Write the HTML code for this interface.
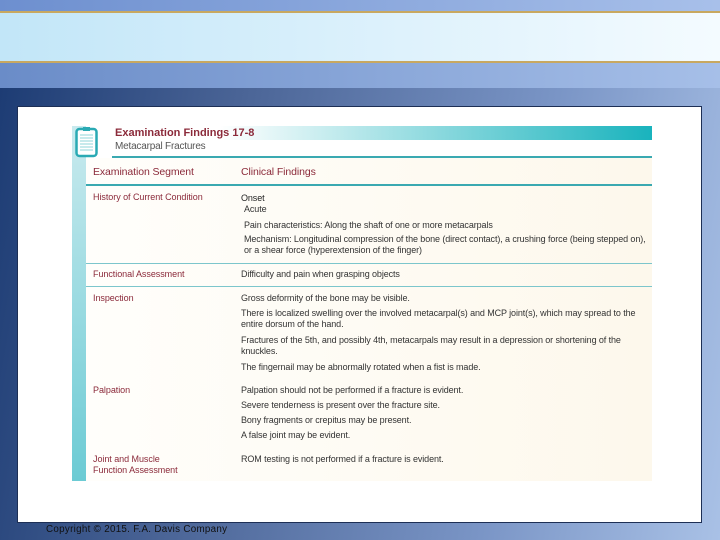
<!DOCTYPE html>
<html><head><meta charset="utf-8"><style>
*{margin:0;padding:0;box-sizing:border-box}
body{width:720px;height:540px;overflow:hidden;position:relative;font-family:"Liberation Sans",sans-serif;background:#5a7ab0}
.a{position:absolute;white-space:nowrap}
.t{font-size:9px;color:#333;letter-spacing:-0.1px;line-height:11px}
.l{font-size:9px;color:#8b2a3a;letter-spacing:-0.05px;line-height:11px}
</style></head><body>
<div class="a" style="left:0;top:0;width:720px;height:12px;background:linear-gradient(90deg,#6d8fcf,#a8c0ea)"></div>
<div class="a" style="left:0;top:11px;width:720px;height:2px;background:#c8a860"></div>
<div class="a" style="left:0;top:13px;width:720px;height:48px;background:linear-gradient(90deg,#c2e6f8,#f4fbff)"></div>
<div class="a" style="left:0;top:61px;width:720px;height:2px;background:#c8a860"></div>
<div class="a" style="left:0;top:63px;width:720px;height:25px;background:linear-gradient(90deg,#6a8cc8,#a6bfe8)"></div>
<div class="a" style="left:0;top:88px;width:720px;height:452px;background:linear-gradient(100deg,#1d3c74 0%,#4a6496 30%,#7a95c6 70%,#a9c1e6 100%)"></div>
<div class="a" style="left:17px;top:106px;width:685px;height:417px;background:#fff;border:1px solid #1d2f55"></div>
<div class="a" style="left:72px;top:126px;width:14px;height:355px;background:linear-gradient(180deg,#c9eaee,#6ccbd4)"></div>
<div class="a" style="left:86px;top:158px;width:566px;height:323px;background:linear-gradient(90deg,#fffefb,#fdf8ec)"></div>
<div class="a" style="left:112px;top:126px;width:540px;height:14px;background:linear-gradient(90deg,#fff 20%,#19b3bd)"></div>
<div class="a" style="left:112px;top:156px;width:540px;height:2px;background:#3aa9b1"></div>
<svg class="a" style="left:75px;top:126px" width="24" height="32" viewBox="0 0 24 32"><rect x="1.5" y="3" width="20" height="27" rx="3" fill="#fff" stroke="#2aaab4" stroke-width="2.5"/><rect x="8" y="1" width="7" height="4" fill="#2aaab4"/><g stroke="#8fd4d9" stroke-width="1"><line x1="5" y1="9" x2="18" y2="9"/><line x1="5" y1="12" x2="18" y2="12"/><line x1="5" y1="15" x2="18" y2="15"/><line x1="5" y1="18" x2="18" y2="18"/><line x1="5" y1="21" x2="18" y2="21"/><line x1="5" y1="24" x2="18" y2="24"/></g></svg>
<div class="a" style="left:115px;top:127px;font-size:11px;font-weight:bold;color:#8b2a3a;letter-spacing:0px">Examination Findings 17-8</div>
<div class="a" style="left:115px;top:141px;font-size:10px;color:#555;letter-spacing:-0.2px">Metacarpal Fractures</div>
<div class="a" style="left:93px;top:166px;font-size:10.5px;color:#8b2a3a;letter-spacing:-0.1px">Examination Segment</div>
<div class="a" style="left:241px;top:166px;font-size:10.5px;color:#8b2a3a;letter-spacing:-0.1px">Clinical Findings</div>
<div class="a" style="left:86px;top:184px;width:566px;height:2px;background:#3aa9b1"></div>
<div class="a" style="left:86px;top:263px;width:566px;height:1px;background:#7cc6cc"></div>
<div class="a" style="left:86px;top:286px;width:566px;height:1px;background:#7cc6cc"></div>

<div class="a l" style="left:93px;top:192px">History of Current Condition</div>
<div class="a t" style="left:241px;top:193px;color:#222">Onset</div>
<div class="a t" style="left:244px;top:204px">Acute</div>
<div class="a t" style="left:244px;top:220px">Pain characteristics: Along the shaft of one or more metacarpals</div>
<div class="a t" style="left:244px;top:234px">Mechanism: Longitudinal compression of the bone (direct contact), a crushing force (being stepped on),</div>
<div class="a t" style="left:244px;top:245px">or a shear force (hyperextension of the finger)</div>
<div class="a l" style="left:93px;top:269px">Functional Assessment</div>
<div class="a t" style="left:241px;top:269px">Difficulty and pain when grasping objects</div>
<div class="a l" style="left:93px;top:293px">Inspection</div>
<div class="a t" style="left:241px;top:293px">Gross deformity of the bone may be visible.</div>
<div class="a t" style="left:241px;top:308px">There is localized swelling over the involved metacarpal(s) and MCP joint(s), which may spread to the</div>
<div class="a t" style="left:241px;top:319px">entire dorsum of the hand.</div>
<div class="a t" style="left:241px;top:335px">Fractures of the 5th, and possibly 4th, metacarpals may result in a depression or shortening of the</div>
<div class="a t" style="left:241px;top:346px">knuckles.</div>
<div class="a t" style="left:241px;top:362px">The fingernail may be abnormally rotated when a fist is made.</div>
<div class="a l" style="left:93px;top:385px">Palpation</div>
<div class="a t" style="left:241px;top:385px">Palpation should not be performed if a fracture is evident.</div>
<div class="a t" style="left:241px;top:400px">Severe tenderness is present over the fracture site.</div>
<div class="a t" style="left:241px;top:415px">Bony fragments or crepitus may be present.</div>
<div class="a t" style="left:241px;top:430px">A false joint may be evident.</div>
<div class="a l" style="left:93px;top:454px">Joint and Muscle</div>
<div class="a l" style="left:93px;top:465px">Function Assessment</div>
<div class="a t" style="left:241px;top:454px">ROM testing is not performed if a fracture is evident.</div>

<div class="a" style="left:46px;top:524px;font-size:9.8px;color:#111;letter-spacing:0.3px">Copyright © 2015. F.A. Davis Company</div>
</body></html>
